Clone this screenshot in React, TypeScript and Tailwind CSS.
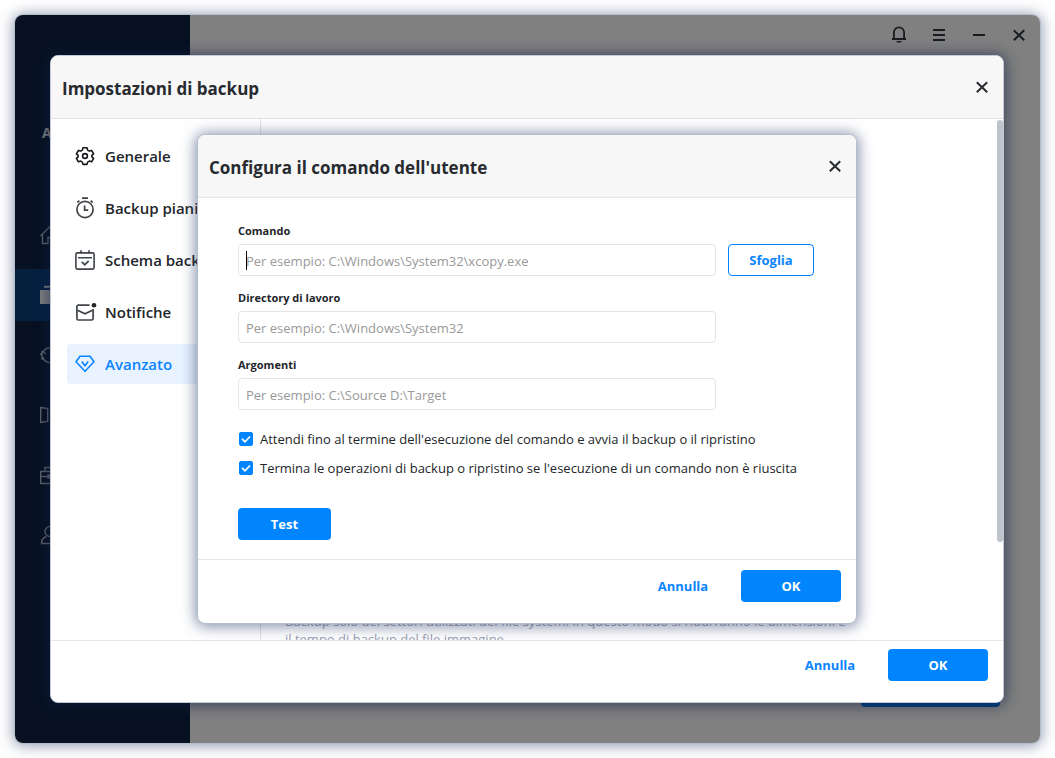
import React, { useState } from 'react';

const CloseIcon = () => (
  <svg viewBox="0 0 20 20" className="size-5" fill="none" stroke="currentColor" strokeWidth="2">
    <path d="M4.8 5.3l10.4 10M15.2 5.3l-10.4 10" />
  </svg>
);

const GearIcon = () => (
  <svg viewBox="0 0 20 20" className="size-5" fill="none" stroke="#15181c" strokeWidth="1.6" strokeLinejoin="round">
    <path d="M8 1.8h4l.6 2.3 1.7 1 2.3-.7 2 3.4-1.7 1.6v1.4l1.7 1.6-2 3.4-2.3-.7-1.7 1-.6 2.3H8l-.6-2.3-1.7-1-2.3.7-2-3.4 1.7-1.6V9.4L1.4 7.8l2-3.4 2.3.7 1.7-1z" />
    <circle cx="10" cy="10" r="2.4" />
  </svg>
);

const ClockIcon = () => (
  <svg viewBox="0 0 20 22" className="h-[22px] w-5" fill="none" stroke="#3f4449" strokeWidth="1.7">
    <circle cx="10" cy="12.5" r="8.1" />
    <path d="M7 1.2h6M2.2 5.4l2.2-1.6M17.8 5.4l-2.2-1.6" />
    <path d="M9.6 8.5v4.7h3.6" />
  </svg>
);

const CalendarIcon = () => (
  <svg viewBox="0 0 20 20" className="size-5" fill="none" stroke="#3f4449" strokeWidth="1.6">
    <rect x=".9" y="2.9" width="18.2" height="16.2" rx="1.5" />
    <path d="M6 .2v3M14 .2v3M3 7.7h14" />
    <path d="M6.8 11.8l3 3 3.9-4" strokeWidth="1.8" />
  </svg>
);

const MailIcon = () => (
  <svg viewBox="0 0 22 20" className="h-5 w-[22px]" fill="none" stroke="#3f4449" strokeWidth="1.7">
    <path d="M14.5 3.2H3.3a1.4 1.4 0 0 0-1.4 1.4v12a1.4 1.4 0 0 0 1.4 1.4h13.4a1.4 1.4 0 0 0 1.4-1.4V7" />
    <path d="M2.5 8.3l7.5 3.5 7.5-3.5" />
    <circle cx="19" cy="3.2" r="2.3" fill="#222" stroke="none" />
  </svg>
);

const DiamondIcon = () => (
  <svg viewBox="0 0 20 20" className="size-5" fill="none" stroke="#0a84ff" strokeWidth="1.6" strokeLinejoin="round">
    <path d="M5 2.3h10l4 5.4-9 9.5-9-9.5z" />
    <path d="M6.8 7.5l3.2 4.3 3.2-4.3" />
  </svg>
);

const navIcons = [
  <path key="home" d="M.5 11L10 1.5 19.500 11M2.500 9v9.500h5.500v-6h4v6h5.500V9" />,
  <path key="backup" d="M0 5h20v14H0zM4 .8h12v2H4z" fill="#808080" stroke="none" />,
  <path key="restore" d="M2 15V6m-1.500 4L2.500 6.500 6 9M3 12a7.500 7.500 0 0 0 14 1.500M3.500 6.500a7.500 7.500 0 0 1 13 0" />,
  <path key="clone" d="M.7 2.500l7 1v13l-7 1zM11 3.500l7-1v15l-7-1z" />,
  <path key="tools" d="M.7 6.500h18.600v12H.7zM5 6.500v-4h10v4M.7 11.500h18.600M8 10h4v3H8z" />,
  <path key="account" d="M10 1.500a5 5 0 1 1 0 10 5 5 0 0 1 0-10zM1.500 18.500c0-4 2-6 5-7M1.500 18.500h17c0-4-2-6-5-7" />,
];
const navLabels = ['Home', 'Backup', 'Ripristina', 'Clona', 'Strumenti', 'Account'];

const menuItems = [
  { label: 'Generale', icon: <GearIcon /> },
  { label: 'Backup pianificato', icon: <ClockIcon /> },
  { label: 'Schema backup', icon: <CalendarIcon /> },
  { label: 'Notifiche', icon: <MailIcon /> },
  { label: 'Avanzato', icon: <DiamondIcon /> },
];

const DialogHeader = ({ title }: { title: string }) => (
  <header className="flex h-[63px] shrink-0 items-center justify-between rounded-t-[7px] border-b border-[#e2e3e5] bg-[#f7f7f7] px-[11px] text-[#272b30]">
    <h2 className="pt-1 text-[17px] font-bold whitespace-nowrap">{title}</h2>
    <button type="button" aria-label="Chiudi">
      <CloseIcon />
    </button>
  </header>
);

const DialogActions = () => (
  <div className="flex justify-end gap-2 text-[13px] font-bold">
    <button type="button" className="h-8 w-[100px] pt-0.5 text-[#0a84ff]">Annulla</button>
    <button type="button" className="h-8 w-[100px] rounded bg-[#0085ff] pt-0.5 text-white">OK</button>
  </div>
);

const Field = ({ id, label, placeholder, caret = false, children = null }: {
  id: string;
  label: string;
  placeholder: string;
  caret?: boolean;
  children?: React.ReactNode;
}) => (
  <div className="flex flex-col gap-[3px]">
    <label htmlFor={id} className="text-[11px] leading-5 font-bold text-[#22262a]">{label}</label>
    <div className="grid grid-cols-[1fr_86px] gap-3">
      <div className="relative">
        <input
          id={id}
          type="text"
          placeholder={placeholder}
          className="block h-8 w-full rounded border border-[#e4e5e7] bg-white px-[7px] pt-0.5 text-[13px] text-[#22262a] outline-none placeholder:text-[#999]"
        />
        {caret && <span className="absolute top-[7px] left-2 h-[19px] w-px bg-black" />}
      </div>
      {children}
    </div>
  </div>
);

const CheckRow = ({ label }: { label: string }) => {
  const [checked, setChecked] = useState(true);

  return (
    <label className="flex h-5 items-center gap-[7px] text-[13px] whitespace-nowrap text-[#22262a]">
      <span className="relative flex size-3.5">
        <input
          type="checkbox"
          checked={checked}
          onChange={() => setChecked(!checked)}
          className="size-3.5 appearance-none rounded-xs border border-[#0085ff] bg-white checked:bg-[#0085ff]"
        />
        <svg viewBox="0 0 14 14" className="pointer-events-none absolute inset-0 size-3.5" fill="none" stroke="white" strokeWidth="1.7">
          <path d="M3 6.8l3 3 5-5.3" />
        </svg>
      </span>
      <span className="pt-0.5">{label}</span>
    </label>
  );
};

const CommandDialog = () => (
  <section className="w-full max-w-[660px] rounded-lg border border-[#b4bdcc] bg-white shadow-[0_1px_14px_2px_rgba(40,60,105,0.55)]">
    <DialogHeader title="Configura il comando dell'utente" />
    <div className="pt-[23px] pr-[42px] pb-[19px] pl-10">
      <div className="flex flex-col gap-3">
        <Field id="comando" label="Comando" placeholder="Per esempio: C:\Windows\System32\xcopy.exe" caret>
          <button type="button" className="h-8 rounded border border-[#0085ff] pt-0.5 text-[13px] font-bold text-[#0a84ff]">Sfoglia</button>
        </Field>
        <Field id="directory" label="Directory di lavoro" placeholder="Per esempio: C:\Windows\System32" />
        <Field id="argomenti" label="Argomenti" placeholder="Per esempio: C:\Source D:\Target" />
      </div>
      <div className="mt-[19px] flex flex-col gap-[9px] pl-px">
        <CheckRow label="Attendi fino al termine dell'esecuzione del comando e avvia il backup o il ripristino" />
        <CheckRow label="Termina le operazioni di backup o ripristino se l'esecuzione di un comando non è riuscita" />
      </div>
      <button type="button" className="mt-[30px] block h-8 w-[93px] rounded bg-[#0085ff] pt-0.5 text-[13px] font-bold text-white">Test</button>
    </div>
    <footer className="border-t border-[#e6e7e9] px-[15px] pt-2.5 pb-[21px]">
      <DialogActions />
    </footer>
  </section>
);

const SettingsDialog = () => (
  <section className="relative flex flex-1 flex-col rounded-lg border border-[#c3cad6] bg-white shadow-[0_1px_14px_2px_rgba(15,30,70,0.6)]">
    <DialogHeader title="Impostazioni di backup" />
    <div className="flex min-h-0 flex-1">
      <nav className="flex w-[210px] shrink-0 flex-col gap-3 border-r border-[#e2e3e5] pt-[17px] pl-4">
        {menuItems.map((item) => (
          <button
            key={item.label}
            type="button"
            className={`flex h-10 items-center rounded-sm pl-2 text-[15px] font-semibold whitespace-nowrap ${item.label === 'Avanzato' ? 'bg-[#e8f3ff] text-[#0a84ff]' : 'text-[#22262a]'}`}
          >
            <span className="w-[30px]">{item.icon}</span>
            {item.label}
          </button>
        ))}
      </nav>
      <div className="flex min-w-0 flex-1 flex-col justify-end overflow-hidden pl-6">
        <p className="-mb-2 text-[13px] leading-[18px] whitespace-nowrap text-[#9ba0b4]">
          Backup solo dei settori utilizzati del file system. In questo modo si ridurranno le dimensioni e
          <br />
          il tempo di backup del file immagine.
        </p>
      </div>
      <div className="w-1.5 pt-px pb-[98px]">
        <div className="h-full rounded-full bg-[#bfc4cc]" />
      </div>
    </div>
    <footer className="border-t border-[#e6e7e9] px-[15px] pt-2 pb-[21px]">
      <DialogActions />
    </footer>
    <div className="absolute inset-0 flex items-center justify-center">
      <CommandDialog />
    </div>
  </section>
);

const App = () => {
  return (
    <div className="flex min-h-screen bg-white p-[15px] font-['Open_Sans','Noto_Sans',sans-serif]">
      <div className="relative flex flex-1 rounded-lg shadow-[0_0_0_1px_#b4bdcc,0_1px_14px_2px_rgba(40,60,105,0.5)]">
        <aside className="w-[175px] shrink-0 rounded-l-lg bg-[#071121]">
          <p className="pt-[108px] pl-[27px] text-sm leading-5 font-bold text-[#808080]">A</p>
          <nav className="mt-[66px] flex flex-col gap-2">
            {navIcons.map((icon, i) => (
              <button
                key={navLabels[i]}
                type="button"
                aria-label={navLabels[i]}
                className={`flex h-[52px] items-center pl-[25px] ${i === 1 ? 'bg-[#05203f]' : ''}`}
              >
                <svg viewBox="0 0 20 20" className="size-5" fill="none" stroke="#5c616b" strokeWidth="1.4">{icon}</svg>
              </button>
            ))}
          </nav>
        </aside>

        <main className="flex flex-1 flex-col justify-between rounded-r-lg bg-[#808080]">
          <div className="flex h-10 items-center justify-end gap-5 pr-[11px] text-[#181b20]">
            <button type="button" aria-label="Notifiche">
              <svg viewBox="0 0 20 20" className="size-5" fill="none" stroke="currentColor" strokeWidth="1.8">
                <path d="M4.9 13.500V7.500a5 5 0 0 1 10.200 0v6M3 14h14" />
                <path d="M7 16h6l-1.500 1.500h-3z" fill="currentColor" stroke="none" />
              </svg>
            </button>
            <button type="button" aria-label="Menu">
              <svg viewBox="0 0 20 20" className="size-5" stroke="currentColor" strokeWidth="2">
                <path d="M4 5h12M4 10h12M4 15h12" />
              </svg>
            </button>
            <button type="button" aria-label="Riduci a icona">
              <svg viewBox="0 0 20 20" className="size-5" stroke="currentColor" strokeWidth="2">
                <path d="M4 10h12" />
              </svg>
            </button>
            <button type="button" aria-label="Chiudi">
              <CloseIcon />
            </button>
          </div>
          <div className="flex justify-end pr-10 pb-9">
            <button type="button" aria-label="Avvia backup" className="h-8 w-[139px] rounded bg-[#004280]" />
          </div>
        </main>

        <div className="absolute inset-0 flex pt-10 pr-9 pb-10 pl-[35px]">
          <SettingsDialog />
        </div>
      </div>
    </div>
  );
};

export default App;
